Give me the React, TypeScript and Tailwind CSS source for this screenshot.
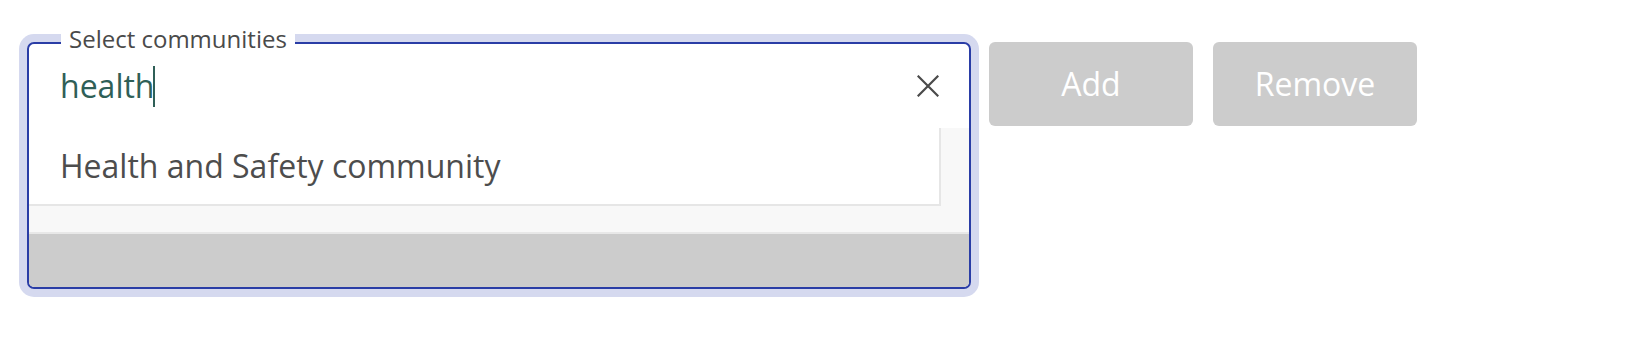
import { useState } from "react";

const font = { fontFamily: '"Open Sans", "Noto Sans", sans-serif' };

function ClearIcon() {
  return (
    <svg width="22" height="22" viewBox="0 0 22 22" className="shrink-0" aria-hidden="true">
      <path d="M1.5 1.5 20.5 20.5M20.5 1.5 1.5 20.5" stroke="#4a4a4a" strokeWidth="2.2" strokeLinecap="square" fill="none" />
    </svg>
  );
}

function CommunitySelect() {
  const [query] = useState("health");
  const options = ["Health and Safety community"];

  return (
    <div className="relative w-[944px] h-[247px] border-2 border-[#2a3da6] rounded-[7px] ring-8 ring-[#d5d9ef] bg-white flex flex-col">
      {/* notched label over the outline */}
      <span className="absolute left-[32px] -top-[21px] px-2 bg-white text-[24px] leading-[32px] text-[#4a4a4a] whitespace-nowrap">
        Select communities
      </span>

      <div className="h-[84px] shrink-0 flex items-center justify-between pl-[31px] pr-[30px] rounded-t-[5px]">
        <div className="flex items-center">
          <span className="text-[32px] text-[#2f5f57] whitespace-nowrap">{query}</span>
          <span className="w-[2px] h-[41px] bg-[#2f5f57] -ml-[1px]" />
        </div>
        <ClearIcon />
      </div>

      <div className="h-[106px] shrink-0 bg-[#f8f8f8] border-b-2 border-[#e8e8e8]">
        <ul className="w-[912px] h-[78px] bg-white border-r-2 border-b-2 border-[#e6e6e6]">
          {options.map((o) => (
            <li key={o} className="pl-[31px] pt-[16px] text-[32px] leading-[44px] text-[#4d4d4d] whitespace-nowrap">
              {o}
            </li>
          ))}
        </ul>
      </div>

      <div className="flex-1 bg-[#cccccc] rounded-b-[5px]" />
    </div>
  );
}

export default function App() {
  return (
    <div className="w-[1652px] h-[356px] bg-white overflow-hidden" style={font}>
      <div className="flex items-start pl-[27px] pt-[42px]">
        <CommunitySelect />
        <button className="ml-[18px] w-[204px] h-[84px] rounded-[6px] bg-[#cccccc] text-white text-[32px] font-medium">
          Add
        </button>
        <button className="ml-5 w-[204px] h-[84px] rounded-[6px] bg-[#cccccc] text-white text-[32px] font-medium">
          Remove
        </button>
      </div>
    </div>
  );
}
